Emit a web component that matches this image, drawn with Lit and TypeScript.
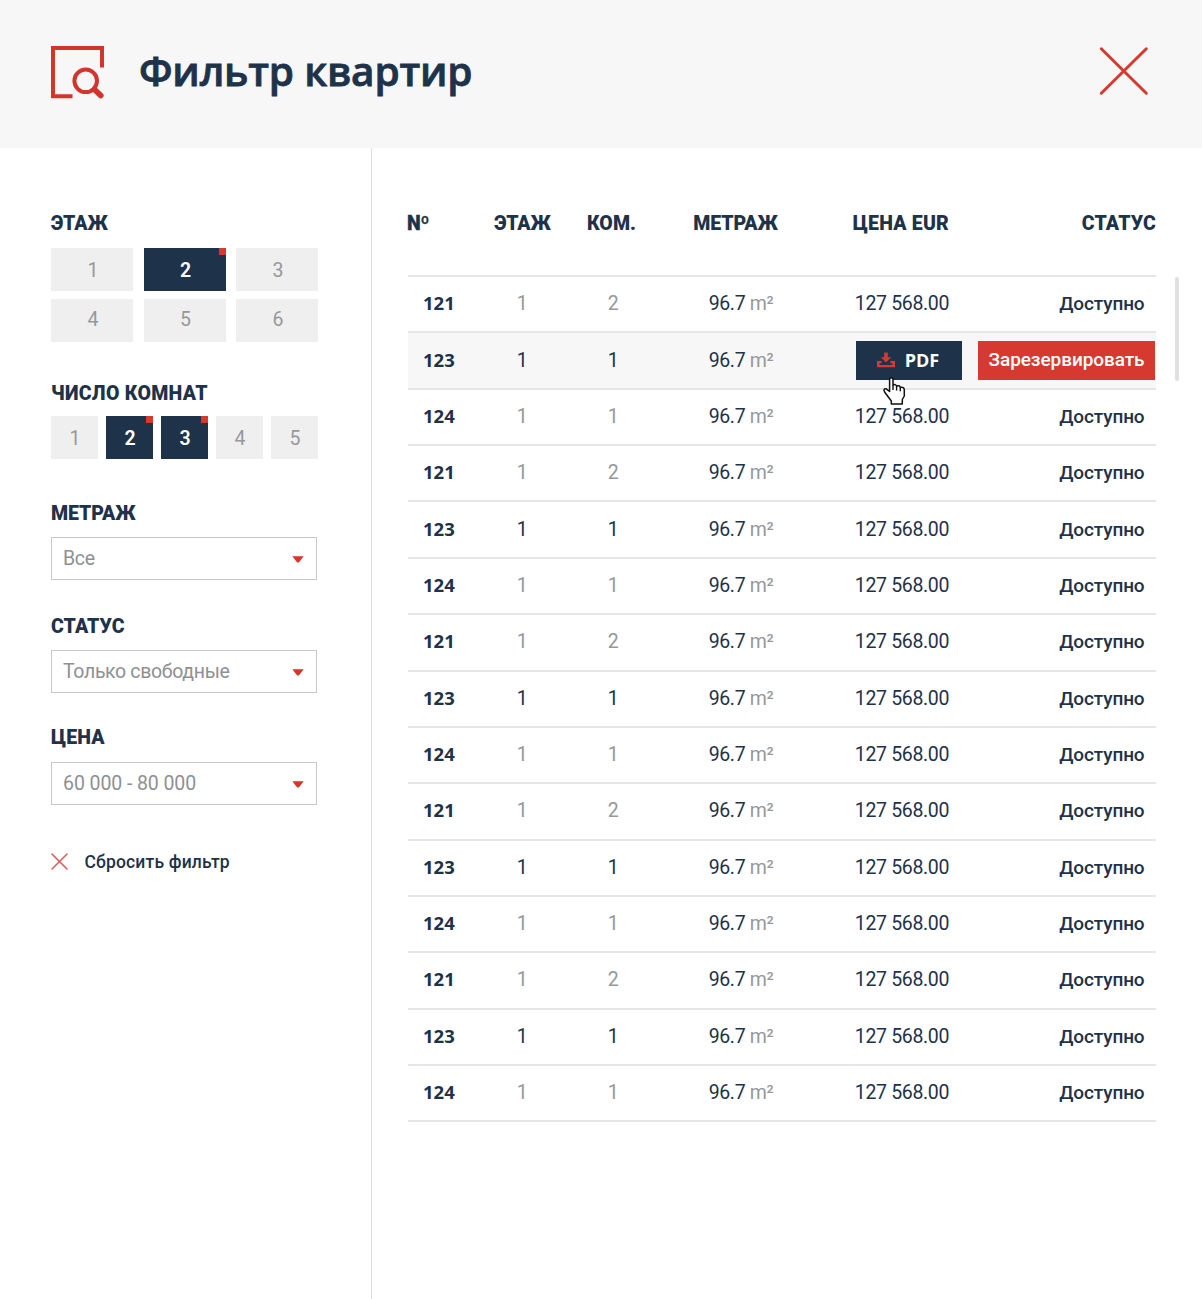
import { LitElement, html, css } from "lit";
import { customElement, property } from "lit/decorators.js";
import { classMap } from "lit/directives/class-map.js";

type Apartment = { no: string; floor: number; rooms: number; strong: boolean; active: boolean };

const PATTERN = [
  { no: "121", rooms: 2, strong: false },
  { no: "123", rooms: 1, strong: true },
  { no: "124", rooms: 1, strong: false },
];

const APARTMENTS: Apartment[] = Array.from({ length: 15 }, (_, i) => ({
  ...PATTERN[i % 3],
  floor: 1,
  active: i === 1,
}));

@customElement("option-tiles")
class OptionTiles extends LitElement {
  @property({ type: Array }) options: number[] = [];
  @property({ type: Array }) selected: number[] = [];
  @property({ type: Boolean, reflect: true }) wide = false;

  static styles = css`
    :host { display: grid; grid-template-columns: repeat(5, 47px); justify-content: space-between; width: 267px; }
    :host([wide]) { grid-template-columns: repeat(3, 82px); row-gap: 8px; }
    .tile {
      height: 43px; box-sizing: border-box; border: 0; padding: 3px 0 0 1px; margin: 0; background: #efefef; color: #96989b;
      font: 400 19.5px/40px Roboto, sans-serif; text-align: center; position: relative;
    }
    :host([wide]) .tile { padding-left: 2px; }
    :host([wide]) .tile:nth-child(n + 4) { padding: 0 0 2px 2px; }
    .tile.on { background: #1e3249; color: #fff; font-weight: 600; }
    .tile.on::after { content: ""; position: absolute; top: 0; right: 0; width: 7px; height: 7px; background: #d8392f; }
  `;

  render() {
    return this.options.map(
      (n) => html`<button class=${classMap({ tile: true, on: this.selected.includes(n) })}>${n}</button>`
    );
  }
}

@customElement("select-box")
class SelectBox extends LitElement {
  @property() value = "";

  static styles = css`
    :host {
      display: flex; align-items: center; justify-content: space-between; box-sizing: border-box;
      width: 266px; height: 43px; border: 1px solid #c5c7c8; padding: 0 12px 0 11px; background: #fff;
    }
    .value { font: 400 19.5px/41px Roboto, sans-serif; letter-spacing: -0.35px; color: #8e9093; white-space: nowrap; }
    .value.digits { letter-spacing: -0.08px; }
    .arrow { display: block; margin-top: 2px; }
  `;

  render() {
    return html`<span class=${classMap({ value: true, digits: /\d/.test(this.value) })}>${this.value}</span>
      <svg class="arrow" width="12" height="7" viewBox="0 0 12 7"><path d="M0.3 0.3H11.7L7.2 6Q6 7.2 4.8 6Z" fill="#d6352c" /></svg>`;
  }
}

@customElement("apartment-table")
class ApartmentTable extends LitElement {
  static styles = css`
    :host { display: block; width: 748px; font-family: Roboto, sans-serif; color: #1e3249; }
    .row, .head { display: grid; grid-template-columns: 68px 92px 90px 154px 137px 207px; align-items: center; }
    .head {
      height: 24px; margin-bottom: 39px; font: 900 19.5px/24px Roboto, sans-serif; letter-spacing: -0.1px;
      white-space: nowrap; text-align: center;
    }
    .head .first { text-align: left; margin-left: -1px; -webkit-text-stroke: 0.3px currentColor; }
    .head .rooms { letter-spacing: 0.1px; margin-left: -3px; }
    .head .mid { margin-left: 1px; }
    .head .right { text-align: right; letter-spacing: 0.2px; }
    .body { border-top: 2px solid #e5e6e7; }
    .row {
      height: 56.37px; box-sizing: border-box; border-bottom: 2px solid #e5e6e7; text-align: center;
      font-size: 19.5px; line-height: 24px; letter-spacing: -0.35px; white-space: nowrap;
    }
    .row.active { background: #f7f7f7; }
    .no { font: 700 18.5px/24px "Open Sans", sans-serif; letter-spacing: 0; text-align: left; padding: 0 0 2px 15px; }
    .num { color: #96989b; }
    .strong .num { color: #1e3249; }
    .area { padding-left: 12px; }
    .unit { color: #96989b; }
    .price { text-align: right; }
    .status { text-align: right; padding-right: 11.5px; font-weight: 500; font-size: 19px; letter-spacing: -0.13px; }
    .actions { grid-column: 5 / 7; display: flex; justify-content: flex-end; gap: 16px; padding-right: 1px; }
    .btn {
      position: relative; height: 39px; box-sizing: border-box; border: 0; margin: 0; padding: 0; color: #fff;
      display: flex; align-items: center; justify-content: center;
    }
    .pdf { width: 106px; background: #1e3249; gap: 10px; font: 700 18px/24px "Open Sans", sans-serif; padding: 0 2px 2px 0; }
    .reserve { width: 177px; background: #d6392f; font: 500 19px/24px Roboto, sans-serif; letter-spacing: -0.08px; padding-bottom: 1px; }
    .icon { display: block; }
    .cursor { position: absolute; left: 26px; top: 35px; z-index: 2; }
  `;

  private actions() {
    return html`<div class="actions">
      <button class="btn pdf">
        <svg class="icon" width="18" height="16" viewBox="0 0 18 16">
          <path d="M7.2 0.5H10.8V5.2H14.2L9 10.6L3.8 5.2H7.2Z" fill="#d6392f" />
          <path d="M0 9H4.6V11.3H2.6V12.9H15.4V11.3H13.4V9H18V15.2H0Z" fill="#d6392f" />
        </svg>
        <span>PDF</span>
        <svg class="cursor" width="25" height="30" viewBox="0 0 25 30">
          <path
            d="M7.6 3Q9.3 0.4 11 3V9Q13.8 7.8 14.5 10Q17.6 9 18.3 11.3Q22.3 10.8 22.3 14V20L20.3 23.5V28H9.3V25L6.3 21L2.6 16Q0.8 12.2 4.2 12.8L7.6 15.5Z"
            fill="#fff" stroke="#111" stroke-width="1.5" stroke-linejoin="round" />
          <path d="M11 9V14M14.6 10V14.5M18.3 11.3V15.3" stroke="#111" stroke-width="1.4" fill="none" />
        </svg>
      </button>
      <button class="btn reserve">Зарезервировать</button>
    </div>`;
  }

  private row(a: Apartment) {
    return html`<div class=${classMap({ row: true, strong: a.strong, active: a.active })}>
      <span class="no">${a.no}</span>
      <span class="num">${a.floor}</span>
      <span class="num">${a.rooms}</span>
      <span class="area">96.7 <span class="unit">m²</span></span>
      ${a.active
        ? this.actions()
        : html`<span class="price">127 568.00</span><span class="status">Доступно</span>`}
    </div>`;
  }

  render() {
    return html`<div class="head">
        <span class="first">Nº</span><span class="mid">ЭТАЖ</span><span class="rooms">КОМ.</span><span class="mid">МЕТРАЖ</span>
        <span class="right">ЦЕНА EUR</span><span class="right">СТАТУС</span>
      </div>
      <div class="body">${APARTMENTS.map((a) => this.row(a))}</div>`;
  }
}

@customElement("app-root")
class AppRoot extends LitElement {
  static styles = css`
    :host { display: flex; flex-direction: column; height: 1299px; background: #fff; color: #1e3249; font-family: Roboto, sans-serif; }
    .top { height: 147.5px; flex: none; background: #f7f7f7; display: flex; box-sizing: border-box; padding: 0 53px 0 50px; align-items: center; }
    .logo { display: block; margin-top: -4px; }
    .title {
      margin: -5px auto 0 35px; font: 600 40.5px/56px "Open Sans", sans-serif; letter-spacing: -0.2px;
      -webkit-text-stroke: 0.8px currentColor; white-space: nowrap;
    }
    .close { display: block; margin-top: -6px; }
    .main { flex: 1; display: flex; min-height: 0; }
    .side { width: 372px; box-sizing: border-box; border-right: 1px solid #dcddde; padding: 64.5px 0 0 51px; display: flex; flex-direction: column; align-items: flex-start; }
    .label { margin: 0 0 12px; font: 900 19.5px/24px Roboto, sans-serif; letter-spacing: -0.05px; white-space: nowrap; }
    .label.rooms { margin: 40px 0 10px; letter-spacing: 0.3px; }
    .label.area { margin: 43px 0 11px; letter-spacing: -0.1px; }
    .label.status { margin: 35px 0 11px; letter-spacing: 0.1px; }
    .label.price { margin: 33px 0 11.5px; letter-spacing: 0.15px; }
    .reset { display: flex; align-items: center; gap: 16.5px; margin-top: 45px; font: 500 17.5px/24px Roboto, sans-serif; letter-spacing: 0.17px; white-space: nowrap; }
    .content { display: flex; align-items: flex-start; padding: 64.5px 0 0 36px; }
    .thumb { width: 4px; height: 104px; margin: 65px 0 0 19px; border-radius: 2px; background: #e0e0e1; }
  `;

  render() {
    return html`<header class="top">
        <svg class="logo" width="54" height="54" viewBox="0 0 54 54">
          <path d="M22.5 51.2H3V3H52V22.5" fill="none" stroke="#d2352c" stroke-width="4" />
          <circle cx="35.7" cy="35.8" r="11.3" fill="none" stroke="#d2352c" stroke-width="4" />
          <path d="M44.5 44.5L50.7 50.5" fill="none" stroke="#d2352c" stroke-width="5.8" stroke-linecap="round" />
        </svg>
        <h1 class="title">Фильтр квартир</h1>
        <svg class="close" width="50" height="50" viewBox="0 0 50 50">
          <path d="M2.3 2.8L47.3 47.2M47.3 2.8L2.3 47.2" stroke="#d6392f" stroke-width="3" stroke-linecap="round" />
        </svg>
      </header>
      <div class="main">
        <aside class="side">
          <h2 class="label">ЭТАЖ</h2>
          <option-tiles wide .options=${[1, 2, 3, 4, 5, 6]} .selected=${[2]}></option-tiles>
          <h2 class="label rooms">ЧИСЛО КОМНАТ</h2>
          <option-tiles .options=${[1, 2, 3, 4, 5]} .selected=${[2, 3]}></option-tiles>
          <h2 class="label area">МЕТРАЖ</h2>
          <select-box value="Все"></select-box>
          <h2 class="label status">СТАТУС</h2>
          <select-box value="Только свободные"></select-box>
          <h2 class="label price">ЦЕНА</h2>
          <select-box value="60 000 - 80 000"></select-box>
          <div class="reset">
            <svg width="17" height="17" viewBox="0 0 17 17">
              <path d="M1 1L16 16M16 1L1 16" stroke="#e0584f" stroke-width="1.5" stroke-linecap="round" />
            </svg>
            <span>Сбросить фильтр</span>
          </div>
        </aside>
        <section class="content">
          <apartment-table></apartment-table>
          <div class="thumb"></div>
        </section>
      </div>`;
  }
}
